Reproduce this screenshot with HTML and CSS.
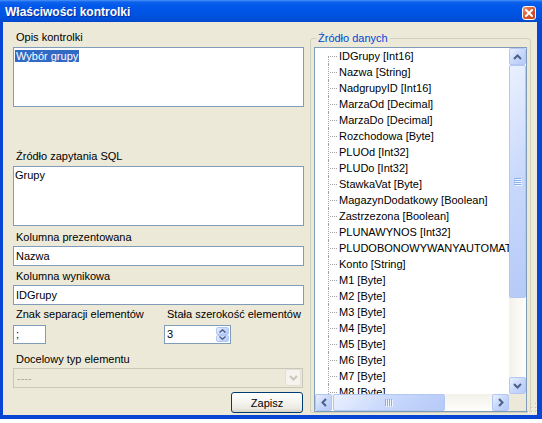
FILE: index.html
```html
<!DOCTYPE html>
<html lang="pl">
<head>
    <meta charset="UTF-8">
    <title>Właściwości kontrolki</title>
    <link rel="stylesheet" href="styles.css">
</head>
<body>
    <div class="window">
        <div class="titlebar">
            <span class="title">Właściwości kontrolki</span>
            <span class="close-btn">
                <svg width="8" height="8" viewBox="0 0 8 8"><path d="M1 1L7 7M7 1L1 7" stroke="#fff" stroke-width="2" stroke-linecap="square"/></svg>
            </span>
        </div>

        <div class="frame">
            <!-- Left column: control settings -->
            <div class="left-col">
                <label class="lbl lbl-opis">Opis kontrolki</label>
                <div class="textbox multiline"><span class="selected">Wybór grupy</span></div>

                <label class="lbl lbl-sql">Źródło zapytania SQL</label>
                <div class="textbox multiline">Grupy</div>

                <label class="lbl lbl-kol">Kolumna prezentowana</label>
                <div class="textbox">Nazwa</div>

                <label class="lbl lbl-wyn">Kolumna wynikowa</label>
                <div class="textbox">IDGrupy</div>

                <div class="pair-row">
                    <div class="pair">
                        <label class="lbl">Znak separacji elementów</label>
                        <div class="textbox small">;</div>
                    </div>
                    <div class="pair">
                        <label class="lbl">Stała szerokość elementów</label>
                        <div class="spinner">
                            <span class="spin-value">3</span>
                            <span class="spin-btns">
                                <span class="xp-btn spin-btn">
                                    <svg width="7" height="4" viewBox="0 0 7 4"><path d="M0.5 3.5L3.5 0.8L6.5 3.5" fill="none" stroke="#4D6185" stroke-width="1.4"/></svg>
                                </span>
                                <span class="xp-btn spin-btn">
                                    <svg width="7" height="4" viewBox="0 0 7 4"><path d="M0.5 0.5L3.5 3.2L6.5 0.5" fill="none" stroke="#4D6185" stroke-width="1.4"/></svg>
                                </span>
                            </span>
                        </div>
                    </div>
                </div>

                <label class="lbl lbl-typ">Docelowy typ elementu</label>
                <div class="combo disabled">
                    <span class="combo-text">----</span>
                    <span class="combo-btn">
                        <svg width="9" height="6" viewBox="0 0 9 6"><path d="M1 1L4.5 4.5L8 1" fill="none" stroke="#C9C7BA" stroke-width="2"/></svg>
                    </span>
                </div>

                <div class="actions">
                    <button class="btn">Zapisz</button>
                </div>
            </div>

            <!-- Right column: data source tree -->
            <fieldset class="groupbox">
                <legend>Źródło danych</legend>
                <div class="tree">
                    <div class="tree-items">
                        <div class="node">IDGrupy [Int16]</div>
                        <div class="node">Nazwa [String]</div>
                        <div class="node">NadgrupyID [Int16]</div>
                        <div class="node">MarzaOd [Decimal]</div>
                        <div class="node">MarzaDo [Decimal]</div>
                        <div class="node">Rozchodowa [Byte]</div>
                        <div class="node">PLUOd [Int32]</div>
                        <div class="node">PLUDo [Int32]</div>
                        <div class="node">StawkaVat [Byte]</div>
                        <div class="node">MagazynDodatkowy [Boolean]</div>
                        <div class="node">Zastrzezona [Boolean]</div>
                        <div class="node">PLUNAWYNOS [Int32]</div>
                        <div class="node">PLUDOBONOWYWANYAUTOMATYCZNIE [Boolean]</div>
                        <div class="node">Konto [String]</div>
                        <div class="node">M1 [Byte]</div>
                        <div class="node">M2 [Byte]</div>
                        <div class="node">M3 [Byte]</div>
                        <div class="node">M4 [Byte]</div>
                        <div class="node">M5 [Byte]</div>
                        <div class="node">M6 [Byte]</div>
                        <div class="node">M7 [Byte]</div>
                        <div class="node">M8 [Byte]</div>
                    </div>

                    <div class="vbar">
                        <span class="xp-btn sb-btn">
                            <svg width="9" height="6" viewBox="0 0 9 6"><path d="M1 5L4.5 1.5L8 5" fill="none" stroke="#4D6185" stroke-width="2"/></svg>
                        </span>
                        <span class="xp-btn thumb-v">
                            <svg width="8" height="8" viewBox="0 0 8 8"><path d="M0 0.5H7M0 2.5H7M0 4.5H7M0 6.5H7" stroke="#8CAEF0"/><path d="M1 1.5H8M1 3.5H8M1 5.5H8M1 7.5H8" stroke="#EEF4FE"/></svg>
                        </span>
                        <span class="track"></span>
                        <span class="xp-btn sb-btn">
                            <svg width="9" height="6" viewBox="0 0 9 6"><path d="M1 1L4.5 4.5L8 1" fill="none" stroke="#4D6185" stroke-width="2"/></svg>
                        </span>
                    </div>

                    <div class="hbar">
                        <span class="xp-btn sb-btn">
                            <svg width="6" height="9" viewBox="0 0 6 9"><path d="M5 1L1.5 4.5L5 8" fill="none" stroke="#4D6185" stroke-width="2"/></svg>
                        </span>
                        <span class="xp-btn thumb-h">
                            <svg width="8" height="8" viewBox="0 0 8 8"><path d="M0.5 0V7M2.5 0V7M4.5 0V7M6.5 0V7" stroke="#8CAEF0"/><path d="M1.5 1V8M3.5 1V8M5.5 1V8M7.5 1V8" stroke="#EEF4FE"/></svg>
                        </span>
                        <span class="track"></span>
                        <span class="xp-btn sb-btn">
                            <svg width="6" height="9" viewBox="0 0 6 9"><path d="M1 1L4.5 4.5L1 8" fill="none" stroke="#4D6185" stroke-width="2"/></svg>
                        </span>
                    </div>

                    <div class="corner"></div>
                </div>
            </fieldset>

            <svg class="grip" width="10" height="10" viewBox="0 0 10 10">
                <g fill="#fff"><rect x="9" y="1" width="1" height="1"/><rect x="5" y="5" width="1" height="1"/><rect x="9" y="5" width="1" height="1"/><rect x="1" y="9" width="1" height="1"/><rect x="5" y="9" width="1" height="1"/><rect x="9" y="9" width="1" height="1"/></g>
                <g fill="#C5C2B2"><rect x="8" y="0" width="1" height="1"/><rect x="4" y="4" width="1" height="1"/><rect x="8" y="4" width="1" height="1"/><rect x="0" y="8" width="1" height="1"/><rect x="4" y="8" width="1" height="1"/><rect x="8" y="8" width="1" height="1"/></g>
            </svg>
        </div>
    </div>
</body>
</html>
```

FILE: styles.css
```css
* {
    box-sizing: border-box;
}
body {
    margin: 0;
    background: #fff;
    font-family: Tahoma, "Liberation Sans", Arial, sans-serif;
    font-size: 11px;
    color: #000;
}
.window {
    width: 542px;
}
.titlebar {
    height: 22px;
    display: flex;
    justify-content: space-between;
    align-items: flex-start;
    background: linear-gradient(#4A93F8 0, #0E62EC 2px, #0058EA 6px, #0054E3 14px, #004DD6 20px, #0046C8 22px);
    color: #fff;
}
.title {
    font-weight: bold;
    font-size: 12px;
    line-height: 19px;
    padding: 3px 0 0 5px;
    text-shadow: 1px 1px #0A2A9A;
}
.close-btn {
    width: 14px;
    height: 14px;
    margin: 6px 6px 0 0;
    border: 1px solid #fff;
    border-radius: 3px;
    background: linear-gradient(135deg, #EB9A7E, #DC5A30 45%, #C8401A);
    display: flex;
    align-items: center;
    justify-content: center;
}
.frame {
    position: relative;
    height: 397px;
    display: flex;
    padding: 0 6px 0 10px;
    background: #ECE9D8;
    border-left: 3px solid #0845D5;
    border-right: 5px solid #0845D5;
    border-bottom: 4px solid #0845D5;
}
.left-col {
    width: 291px;
    margin-right: 6px;
    display: flex;
    flex-direction: column;
}
.lbl {
    display: block;
    line-height: 13px;
    padding-left: 3px;
    white-space: nowrap;
}
.lbl-opis { margin-top: 9px; margin-bottom: 3px; }
.lbl-sql { margin-top: 43px; margin-bottom: 3px; }
.lbl-kol { margin-top: 5px; margin-bottom: 2px; }
.lbl-wyn { margin-top: 4px; margin-bottom: 2px; }
.lbl-typ { margin-top: 9px; margin-bottom: 2px; }

.textbox {
    height: 20px;
    border: 1px solid #7F9DB9;
    background: #fff;
    padding: 0 2px;
    line-height: 18px;
    white-space: nowrap;
}
.textbox.multiline {
    height: 60px;
    padding: 2px 1px;
    line-height: 13px;
}
.textbox.small {
    width: 33px;
    height: 19px;
    line-height: 17px;
}
.selected {
    background: #316AC5;
    color: #fff;
    padding: 0 1px;
}
.pair-row {
    display: grid;
    grid-template-columns: 151px 1fr;
    margin-top: 3px;
}
.pair .lbl {
    margin-bottom: 4px;
}
.spinner {
    width: 67px;
    height: 19px;
    border: 1px solid #7F9DB9;
    background: #fff;
    display: flex;
}
.spin-value {
    flex: 1;
    padding-left: 2px;
    line-height: 17px;
}
.spin-btns {
    width: 14px;
    display: flex;
    flex-direction: column;
    padding: 1px 1px 1px 0;
}
.xp-btn {
    display: flex;
    align-items: center;
    justify-content: center;
    border: 1px solid #B3C7F3;
    border-radius: 2px;
    background: linear-gradient(135deg, #EAF0FE, #C8D8FC 50%, #B6CAF7);
}
.spin-btn {
    flex: 1;
}
.combo {
    width: 290px;
    height: 20px;
    border: 1px solid #C9C7BA;
    background: #ECE9D8;
    display: flex;
}
.combo-text {
    flex: 1;
    padding-left: 3px;
    line-height: 18px;
    color: #ACA899;
}
.combo-btn {
    width: 16px;
    margin: 0 1px 1px 0;
    border: 1px solid #E2E0D6;
    border-radius: 2px;
    background: #F4F3EE;
    display: flex;
    align-items: center;
    justify-content: center;
}
.actions {
    display: flex;
    justify-content: flex-end;
    margin-top: 4px;
}
.btn {
    width: 72px;
    height: 21px;
    margin-right: 1px;
    padding: 0;
    border: 1px solid #003C74;
    border-radius: 3px;
    background: linear-gradient(#FFFFFF, #F7F6F2 40%, #ECEAE2 80%, #D8D2C6);
    font: inherit;
    color: #000;
}

.groupbox {
    width: 221px;
    margin: 10px 0 0;
    padding: 2px 3px 0;
    border: 1px solid #D0D0BF;
    border-radius: 3px;
    min-width: 0;
    align-self: flex-start;
}
.groupbox legend {
    padding: 0 2px;
    margin-left: 2px;
    line-height: 13px;
    color: #0046D5;
}
.tree {
    height: 365px;
    border: 1px solid #7F9DB9;
    background: #fff;
    display: grid;
    grid-template-columns: 1fr 17px;
    grid-template-rows: 1fr 17px;
}
.tree-items {
    overflow: hidden;
}
.node {
    position: relative;
    height: 16px;
    line-height: 16px;
    padding-left: 24px;
    white-space: nowrap;
}
.node::before {
    content: "";
    position: absolute;
    left: 13px;
    top: 0;
    bottom: 0;
    border-left: 1px dotted #A0A0A0;
}
.node:first-child::before {
    top: 8px;
}
.node::after {
    content: "";
    position: absolute;
    left: 15px;
    top: 8px;
    width: 7px;
    border-top: 1px dotted #A0A0A0;
}
.vbar {
    display: flex;
    flex-direction: column;
    background: linear-gradient(to right, #F3F1EA, #FEFEFB);
}
.hbar {
    display: flex;
    background: linear-gradient(#F3F1EA, #FEFEFB);
}
.sb-btn {
    width: 17px;
    height: 17px;
}
.thumb-v {
    height: 233px;
}
.thumb-h {
    width: 112px;
    margin-left: 1px;
}
.track {
    flex: 1;
}
.corner {
    background: #ECE9D8;
}
.grip {
    position: absolute;
    right: 0;
    bottom: 2px;
}
```
